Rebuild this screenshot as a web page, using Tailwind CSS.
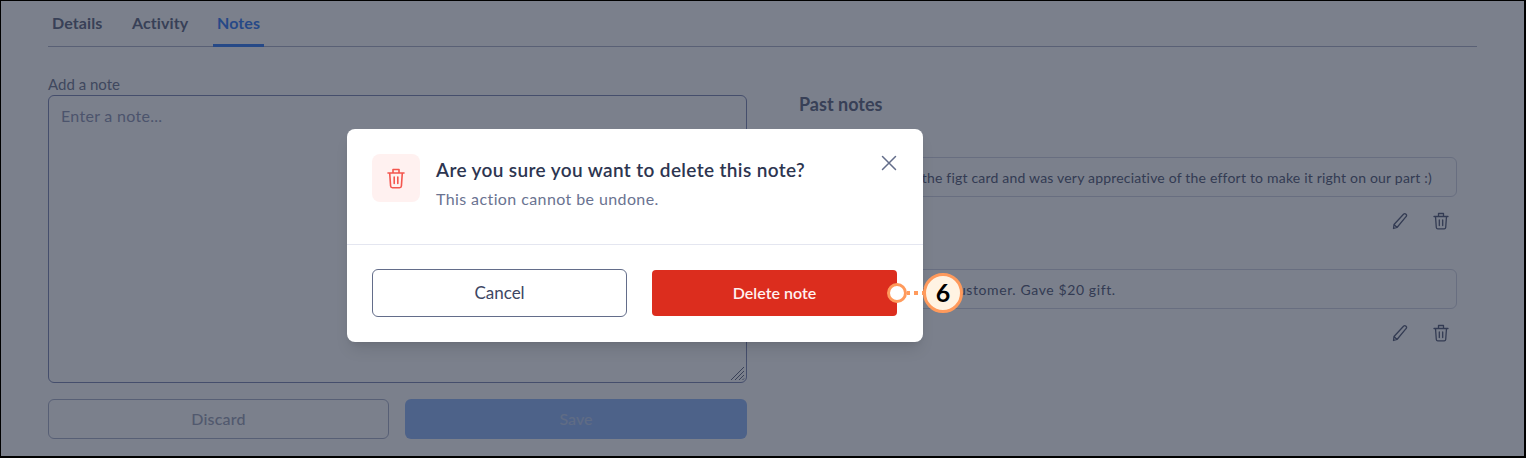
<!DOCTYPE html>
<html lang="en">
<head>
    <meta charset="UTF-8">
    <title>Delete note</title>
    <script src="https://cdn.jsdelivr.net/npm/@tailwindcss/browser@4"></script>
</head>
<body class="bg-white font-['Lato','Liberation_Sans',sans-serif]">
<div class="relative w-[1526px] h-[458px] overflow-hidden">

    <!-- page underneath -->
    <div class="h-full pl-[48px] pr-[49px]">
        <div class="flex h-[47px] border-b border-[#b8bdd0] text-[16px] font-bold tracking-[0.1px] text-[#747a90] pt-[11px]">
            <span class="w-[84px] pl-[4px]">Details</span>
            <span class="w-[81px]">Activity</span>
            <span class="w-[51px] h-[36px] text-center text-[#4f8cf5] border-b-[3px] border-[#4f8cf5]">Notes</span>
        </div>
        <div class="flex mt-[27px] gap-[33px]">
            <div class="w-[699px] shrink-0">
                <div class="text-[15px] leading-[20px] text-[#848aa0]">Add a note</div>
                <div class="relative h-[288px] mt-[1px] border border-[#8e96bd] rounded-[6px] px-[12px] pt-[8px] text-[16px] tracking-[0.3px] text-[#9da3bd]">
                    Enter a note...
                    <svg class="absolute right-[1px] bottom-[1px]" width="15" height="15" viewBox="0 0 15 15" fill="none" stroke="#747a90" stroke-width="1"><path d="M1 14 14 1M5 14 14 5M9 14 14 9M12.500 14 14 12.500"/></svg>
                </div>
                <div class="flex gap-[16px] mt-[16px]">
                    <div class="w-[341px] h-[40px] border border-[#b5bbd0] rounded-[6px] flex items-center justify-center text-[16px] font-medium tracking-[0.2px] text-[#a8adc0]">Discard</div>
                    <div class="flex-1 h-[40px] bg-[#a0c0f8] rounded-[6px] flex items-center justify-center text-[16px] font-medium text-[#c5d5f0]">Save</div>
                </div>
            </div>
            <div class="flex-1 min-w-0 pl-[19px] pr-[20px]">
                <div class="mt-[18px] text-[18px] leading-[24px] font-bold text-[#747a90]">Past notes</div>
                <div class="mt-[41px] h-[40px] border border-[#d8dae5] rounded-[6px] flex items-center justify-end pr-[24px] text-[14px] tracking-[0.2px] text-[#6a7088] whitespace-nowrap">Customer received the figt card and was very appreciative of the effort to make it right on our part :)</div>
                <div class="flex justify-end gap-[25px] pr-[8px] mt-[15px] h-[18px] text-[#6a7088]">
                    <svg width="16" height="18" viewBox="0 0 16 18" fill="none" stroke="currentColor" stroke-width="1.300" stroke-linejoin="round"><path d="M1.500 16.500 2 12.500 11.500 2.200a1.800 1.800 0 0 1 2.500 0 1.800 1.800 0 0 1 0 2.500L5 15.500zM2 12.500 5 15.500"/></svg>
                    <svg width="16" height="18" viewBox="0 0 16 18" fill="none" stroke="currentColor" stroke-width="1.300" stroke-linecap="round" stroke-linejoin="round"><path d="M1 4.500h14M5.500 4.500V1.500h5v3M2.500 4.500l.8 11a1.500 1.500 0 0 0 1.500 1.300h6.400a1.500 1.500 0 0 0 1.500-1.300l.8-11M6.300 8v5.500M9.700 8v5.500"/></svg>
                </div>
                <div class="mt-[39px] h-[40px] border border-[#d8dae5] rounded-[6px] flex items-center pl-[75px] text-[14px] tracking-[0.6px] text-[#6a7088] whitespace-nowrap">Very upset customer. Gave $20 gift.</div>
                <div class="flex justify-end gap-[25px] pr-[8px] mt-[15px] h-[18px] text-[#6a7088]">
                    <svg width="16" height="18" viewBox="0 0 16 18" fill="none" stroke="currentColor" stroke-width="1.300" stroke-linejoin="round"><path d="M1.500 16.500 2 12.500 11.500 2.200a1.800 1.800 0 0 1 2.500 0 1.800 1.800 0 0 1 0 2.500L5 15.500zM2 12.500 5 15.500"/></svg>
                    <svg width="16" height="18" viewBox="0 0 16 18" fill="none" stroke="currentColor" stroke-width="1.300" stroke-linecap="round" stroke-linejoin="round"><path d="M1 4.500h14M5.500 4.500V1.500h5v3M2.500 4.500l.8 11a1.500 1.500 0 0 0 1.500 1.300h6.400a1.500 1.500 0 0 0 1.500-1.300l.8-11M6.300 8v5.500M9.700 8v5.500"/></svg>
                </div>
            </div>
        </div>
    </div>

    <!-- dim overlay -->
    <div class="absolute inset-0 bg-[#010b22]/52"></div>

    <!-- modal -->
    <div class="absolute left-[347px] top-[129px] w-[576px] h-[213px] bg-white rounded-[8px] shadow-lg">
        <div class="relative flex h-[116px] border-b border-[#e4e6f0] px-[25px] pt-[25px] gap-[16px]">
            <div class="w-[48px] h-[48px] rounded-[8px] bg-[#fff1f0] flex items-center justify-center">
                <svg width="18" height="21" viewBox="0 0 18 21" fill="none" stroke="#f4564e" stroke-width="1.600" stroke-linecap="round" stroke-linejoin="round"><path d="M1 5h16M6 5V1.500h6V5M2.700 5l.9 13a1.800 1.800 0 0 0 1.800 1.700h7.200a1.800 1.800 0 0 0 1.800-1.700l.9-13M7.200 9v6.500M10.800 9v6.500"/></svg>
            </div>
            <div>
                <div class="text-[19px] leading-[28px] mt-[2px] font-semibold tracking-[0.37px] text-[#2d3550]">Are you sure you want to delete this note?</div>
                <div class="text-[16px] leading-[22px] mt-[4px] tracking-[0.4px] text-[#6a7391]">This action cannot be undone.</div>
            </div>
            <svg class="absolute left-[534px] top-[26px]" width="16" height="16" viewBox="0 0 16 16" fill="none" stroke="#636d8a" stroke-width="1.500" stroke-linecap="round"><path d="M1.500 1.500 14.500 14.500M14.500 1.500 1.500 14.500"/></svg>
        </div>
        <div class="flex items-center px-[25px] pt-[24px] gap-[25px]">
            <div class="w-[255px] h-[48px] border border-[#636d8a] rounded-[6px] flex items-center justify-center text-[17px] text-[#3d4663]">Cancel</div>
            <div class="w-[245px] h-[46px] bg-[#dc2d1e] rounded-[4px] flex items-center justify-center text-[16px] font-semibold text-[#fff1f0]">Delete note</div>
        </div>
    </div>

    <!-- callout -->
    <div class="absolute left-[887px] top-[283px] w-[20px] h-[20px] rounded-full bg-white border-[3px] border-[#ff9a5c]"></div>
    <div class="absolute left-[907px] top-[291px] flex gap-[4px]">
        <span class="w-[3px] h-[4px] bg-[#ff9a5c]"></span>
        <span class="w-[4px] h-[4px] bg-[#ff9a5c]"></span>
        <span class="w-[3px] h-[4px] bg-[#ff9a5c]"></span>
    </div>
    <div class="absolute left-[923px] top-[273px] w-[40px] h-[40px] rounded-full bg-[#fff3e3] border-[3px] border-[#ff9a5c] flex items-center justify-center text-[25px] font-bold text-black">6</div>

    <!-- screenshot frame -->
    <div class="absolute inset-0 border border-b-2 border-r-2 border-black pointer-events-none"></div>
</div>
</body>
</html>
